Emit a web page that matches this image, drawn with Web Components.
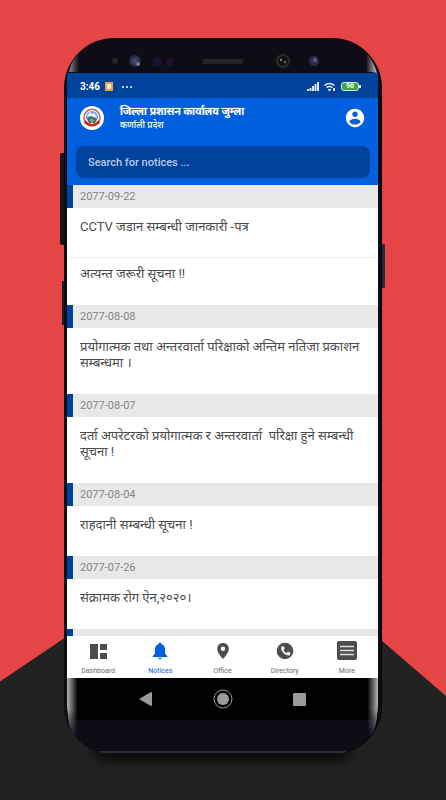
<!DOCTYPE html>
<html lang="ne">
<head>
<meta charset="utf-8">
<meta name="viewport" content="width=device-width, initial-scale=1">
<title>Notices</title>
<style>
  :root {
    --blue: #005fdc;
    --blue-dark: #00439c;
    --grey: #e8e8e8;
    --ink: #4c4c4c;
    --body: #0f0c16;
  }

  body {
    margin: 0;
    font-family: Roboto, "Noto Sans", "Noto Sans Devanagari", sans-serif;
    color: var(--ink);
  }
</style>
</head>
<body>

<promo-stage>
  <phone-frame>
    <status-bar slot="screen" time="3:46" battery="96"></status-bar>
    <app-header slot="screen">
      <span slot="title">जिल्ला प्रशासन कार्यालय जुम्ला</span>
      <span slot="subtitle">कर्णाली प्रदेश</span>
    </app-header>
    <notice-list slot="screen">
      <notice-group date="2077-09-22">
        <notice-item>CCTV जडान सम्बन्धी जानकारी -पत्र</notice-item>
        <notice-item>अत्यन्त जरूरी सूचना !!</notice-item>
      </notice-group>
      <notice-group date="2077-08-08">
        <notice-item>प्रयोगात्मक तथा अन्तरवार्ता परिक्षाको अन्तिम नतिजा प्रकाशन सम्बन्धमा ।</notice-item>
      </notice-group>
      <notice-group date="2077-08-07">
        <notice-item>दर्ता अपरेटरको प्रयोगात्मक र अन्तरवार्ता&nbsp; परिक्षा हुने सम्बन्धी सूचना !</notice-item>
      </notice-group>
      <notice-group date="2077-08-04">
        <notice-item>राहदानी सम्बन्धी सूचना !</notice-item>
      </notice-group>
      <notice-group date="2077-07-26">
        <notice-item>संक्रामक रोग ऐन,२०२०।</notice-item>
      </notice-group>
      <notice-group></notice-group>
    </notice-list>
    <tab-bar slot="screen">
      <tab-item icon="dashboard">Dashboard</tab-item>
      <tab-item icon="bell" active>Notices</tab-item>
      <tab-item icon="pin">Office</tab-item>
      <tab-item icon="phone">Directory</tab-item>
      <tab-item icon="menu">More</tab-item>
    </tab-bar>
    <system-nav slot="screen"></system-nav>
  </phone-frame>
</promo-stage>

<script>
const define = (name, html) => {
  customElements.define(name, class extends HTMLElement {
    connectedCallback() {
      const shadow = this.attachShadow({ mode: "open" });
      shadow.innerHTML = typeof html === "function" ? html(this) : html;
    }
  });
};

const icons = {
  dashboard: `<svg viewBox="0 0 20 20"><path d="M2 3h8v15H2zM12 3h7v6h-7zM12 12h7v6h-7z"/></svg>`,
  bell: `<svg viewBox="0 0 20 20"><path d="M10 1.5c.8 0 1.3.6 1.3 1.4 2.4.6 3.8 2.700 3.8 5.300v4.300l2.200 2.700v.8H2.700v-.8l2.200-2.700V8.200c0-2.600 1.400-4.700 3.800-5.300 0-.8.5-1.400 1.300-1.400zM8.400 16.800h3.200c0 .9-.7 1.500-1.600 1.500s-1.600-.6-1.600-1.500z"/></svg>`,
  pin: `<svg viewBox="0 0 20 20"><path fill-rule="evenodd" d="M10 2C6.700 2 4.200 4.500 4.200 7.700 4.200 12 10 18 10 18s5.800-6 5.800-10.300C15.800 4.500 13.300 2 10 2zm0 3.600a2.200 2.200 0 1 1 0 4.400 2.200 2.200 0 0 1 0-4.400z"/></svg>`,
  phone: `<svg viewBox="0 0 20 20"><circle cx="10" cy="10" r="8.300"/><path fill="#fff" d="M6.600 5.600l1.800-.4c.3 0 .5.100.6.400l.6 1.700c.1.300 0 .5-.2.700l-1 .9c.8 1.600 1.700 2.500 3.300 3.200l.8-1.100c.2-.2.500-.3.700-.2l1.800.8c.3.100.4.400.3.700l-.4 1.700c-.1.300-.3.500-.6.500-4.500 0-8.200-3.700-8.200-8.200 0-.4.200-.6.5-.7z"/></svg>`,
  menu: `<svg viewBox="0 0 20 20"><rect width="20" height="19" rx="2"/><path stroke="#ddd" stroke-width="1.500" d="M3 5.500h14M3 9.500h14M3 13.500h14"/></svg>`,
};

define("promo-stage", `
  <style>
    :host {
      display: flex;
      box-sizing: border-box;
      height: 100vh;
      padding: 38px 64px 46px;
      position: relative;
      isolation: isolate;
      overflow: hidden;
      background: #e54645;
    }

    /* dark hill behind the phone */
    :host::before {
      content: "";
      position: absolute;
      inset: 0;
      z-index: -1;
      background: #222;
      clip-path: polygon(0 85.2%, 54% 64.9%, 100% 87%, 100% 100%, 0 100%);
    }

    ::slotted(*) { flex: 1; }
  </style>
  <slot></slot>
`);

define("phone-frame", `
  <style>
    :host {
      display: flex;
      position: relative;
      min-width: 0;
    }

    .body {
      flex: 1;
      min-width: 0;
      display: flex;
      flex-direction: column;
      box-sizing: border-box;
      position: relative;
      overflow: hidden;
      border-radius: 50px 50px 48px 48px;
      background: var(--body);
      padding: 0 3px;
      border-right: 1px solid #05050a;
    }

    :host::after {
      content: "";
      position: absolute;
      inset: auto 32px 0;
      height: 20px;
      z-index: -1;
      border-radius: 20px;
      box-shadow: 0 4px 12px 2px #080808;
    }

    .top, .chin { display: block; width: 100%; }
    .top { height: 35px; }
    .chin { height: 34px; }

    .key {
      position: absolute;
      width: 4px;
      background: #15161c;
      z-index: -1;
    }
    .volume { left: -4px; top: 16%; height: 92px; border-radius: 2px 0 0 2px; }
    .assist { left: -2px; top: 34%; height: 44px; background: #15222a; }
    .power { right: -3px; top: 206px; height: 44px; border-radius: 0 1px 1px 0; background: #242a3a; }

    .gloss {
      position: absolute;
      bottom: 14px;
      width: 12px;
      height: 62px;
      opacity: 0.9;
      -webkit-mask: linear-gradient(#000 50%, transparent);
    }
    .gloss.left {
      left: 3px;
      background: linear-gradient(90deg, #ccc, transparent 90%);
      border-radius: 0 0 0 14px / 0 0 0 42px;
    }
    .gloss.right {
      right: 3px;
      background: linear-gradient(270deg, #ccc, transparent 90%);
      border-radius: 0 0 14px 0 / 0 0 42px 0;
    }
  </style>
  <span class="key volume"></span>
  <span class="key assist"></span>
  <span class="key power"></span>
  <div class="body">
    <svg class="top" viewBox="0 0 311 35" preserveAspectRatio="none" aria-hidden="true">
      <defs>
        <linearGradient id="shineL"><stop stop-color="#bbb"/><stop offset="1" stop-color="#bbb" stop-opacity="0"/></linearGradient>
        <linearGradient id="shineR"><stop stop-color="#eee" stop-opacity="0"/><stop offset="1" stop-color="#eee"/></linearGradient>
        <radialGradient id="lens"><stop stop-color="#51517e"/><stop offset="1" stop-color="#20203f"/></radialGradient>
      </defs>
      <path fill="url(#shineL)" opacity=".7" d="M2 34Q4 23 12 15v19z"/>
      <path fill="url(#shineR)" opacity=".8" d="M299 15q8 8 11 20l-5-1h-6z"/>
      <circle cx="48" cy="23" r="3" fill="#25242a"/>
      <circle cx="68" cy="23" r="6" fill="url(#lens)"/>
      <circle cx="71" cy="26" r="2" fill="#7777a2"/>
      <circle cx="90" cy="24" r="5" fill="#1a1230"/>
      <circle cx="103" cy="24" r="4" fill="#1a1230"/>
      <rect x="136" y="21" width="40" height="5" rx="1" fill="#242328"/>
      <circle cx="216" cy="23" r="6" fill="#131313" stroke="#2b2a2a" stroke-width="2"/>
      <circle cx="214" cy="22" r="1" fill="#aaa"/><circle cx="218" cy="24" r="1" fill="#888"/>
      <circle cx="247" cy="23" r="5" fill="#2c2c46"/>
      <circle cx="248" cy="22" r="2" fill="#566087"/>
    </svg>
    <slot name="screen"></slot>
    <svg class="chin" viewBox="0 0 311 34" preserveAspectRatio="none" aria-hidden="true">
      <path stroke="#2c2a34" stroke-width="2" d="M32 32h247"/>
    </svg>
    <span class="gloss left"></span>
    <span class="gloss right"></span>
  </div>
`);

define("status-bar", (el) => `
  <style>
    :host {
      display: flex;
      align-items: center;
      height: 25px;
      padding: 2px 19px 0 13px;
      box-sizing: border-box;
      gap: 5px;
      background: var(--blue-dark);
      color: #fff;
      font-size: 10px;
      font-weight: 700;
    }
    svg { display: block; }
    .dots { margin-left: 3px; }
    .signal { margin-left: auto; }
    .battery {
      display: flex;
      align-items: center;
      justify-content: center;
      box-sizing: border-box;
      width: 18px;
      height: 9px;
      border: 1px solid #dde8ee;
      border-radius: 3px;
      background: #3aa745;
      font-size: 7px;
      line-height: 7px;
      position: relative;
    }
    .battery::after {
      content: "";
      position: absolute;
      right: -3px;
      top: 2px;
      width: 2px;
      height: 3px;
      background: #dde8ee;
    }
  </style>
  <span>${el.getAttribute("time")}</span>
  <svg width="8" height="9" viewBox="0 0 8 9"><rect width="8" height="9" fill="#f2a23c"/><rect x="2" y="2" width="4" height="5" rx="1" fill="#fff5dc"/></svg>
  <svg class="dots" width="12" height="4" viewBox="0 0 12 4" fill="#fff"><circle cx="2" cy="2" r="1"/><circle cx="6" cy="2" r="1"/><circle cx="10" cy="2" r="1"/></svg>
  <svg class="signal" width="12" height="9" viewBox="0 0 12 9" fill="#dbe6f5"><path d="M0 7h2v2H0zM2.500 6h2v3h-2zM5 4h2v5H5zM7.500 2h2v7h-2zM10 0h2v9h-2z"/></svg>
  <svg width="12" height="10" viewBox="0 0 12 10" fill="none" stroke="#dbe6f5" stroke-width="1.500"><path d="M.5 3.500q5-4 10 0M2.500 5.700q3-2.500 6 0"/><path fill="#dbe6f5" stroke="none" d="M5.500 9.500L3.700 7.400q1.800-1.500 3.600 0zM9 6h2v3H9z"/></svg>
  <span class="battery">${el.getAttribute("battery")}</span>
`);

define("app-header", `
  <style>
    :host {
      display: block;
      padding: 0 8px 7px 9px;
      background: var(--blue);
      color: #fff;
    }
    .bar {
      display: flex;
      align-items: center;
      height: 48px;
      box-sizing: border-box;
      padding: 0 4px 8px;
    }
    .emblem { display: block; width: 24px; height: 24px; }
    .names {
      flex: 1;
      min-width: 0;
      margin-left: 16px;
      white-space: nowrap;
    }
    h1, p { margin: 0; }
    h1 {
      font-size: 11px;
      line-height: 14px;
      font-weight: 500;
      text-shadow: 0 0 1px #fff;
    }
    p { font-size: 9px; line-height: 12px; font-weight: 500; }
    button {
      border: 0;
      padding: 0;
      background: none;
      color: inherit;
    }
    button svg { display: block; width: 22px; height: 22px; }
    input {
      display: block;
      width: 100%;
      height: 32px;
      box-sizing: border-box;
      padding: 0 12px;
      border: 0;
      border-radius: 8px;
      background: var(--blue-dark);
      color: #fff;
      font: 500 11px Roboto, sans-serif;
    }
    input::placeholder { color: #b9cae6; opacity: 1; }
  </style>
  <div class="bar">
    <svg class="emblem" viewBox="0 0 24 24" aria-hidden="true">
      <circle cx="12" cy="12" r="12" fill="#fff"/>
      <path fill="none" stroke="#b56a5c" stroke-width="1.500" d="M5.500 16A8 8 0 1 1 18.500 16"/>
      <circle cx="12" cy="11" r="6" fill="#6ea7cf"/>
      <path fill="#e9f2f8" d="M7 10l3-4 2 2 2-1 3 4-5 1z"/>
      <path fill="#35698f" d="M7 12l4-2 6 3-2 4H9z"/>
      <path fill="#8f9b4d" d="M9 14l3-2 3 3-3 2z"/>
      <path fill="none" stroke="#c5281f" stroke-width="2.500" d="M4.500 15.500q7.500 7.500 15 0"/>
    </svg>
    <div class="names">
      <h1><slot name="title"></slot></h1>
      <p><slot name="subtitle"></slot></p>
    </div>
    <button type="button" aria-label="Account">
      <svg viewBox="0 0 24 24" fill="currentColor"><path d="M12 2C6.480 2 2 6.480 2 12s4.480 10 10 10 10-4.480 10-10S17.520 2 12 2zm0 3c1.660 0 3 1.340 3 3s-1.340 3-3 3-3-1.340-3-3 1.340-3 3-3zm0 14.200c-2.500 0-4.710-1.280-6-3.220.03-1.990 4-3.080 6-3.080s5.970 1.090 6 3.080c-1.290 1.940-3.500 3.220-6 3.220z"/></svg>
    </button>
  </div>
  <input type="search" placeholder="Search for notices ..." aria-label="Search for notices">
`);

define("notice-list", `
  <style>
    :host {
      display: block;
      flex: 1 1 0;
      min-height: 0;
      overflow: hidden;
      background: #fff;
    }
  </style>
  <slot></slot>
`);

define("notice-group", (el) => `
  <style>
    :host { display: block; }
    h2 {
      margin: 0 0 3px;
      height: 23px;
      box-sizing: border-box;
      padding-left: 7px;
      border-left: 6px solid var(--blue-dark);
      background: var(--grey);
      color: #858585;
      font-size: 11px;
      line-height: 23px;
      font-weight: 400;
    }
  </style>
  <h2>${el.getAttribute("date") ?? ""}</h2>
  <slot></slot>
`);

define("notice-item", `
  <style>
    :host {
      display: block;
      padding: 8px 16px 22px 13px;
      border-bottom: 1px solid transparent;
      font-size: 13px;
      line-height: 16px;
    }
    :host(:not(:last-child)) { border-color: #eee; }
  </style>
  <slot></slot>
`);

define("tab-bar", `
  <style>
    :host { display: block; background: #fff; }
    nav { display: flex; }
    ::slotted(*) { flex: 1 1 0; min-width: 0; }
  </style>
  <nav><slot></slot></nav>
`);

define("tab-item", (el) => `
  <style>
    :host { display: flex; color: #6c6c6c; }
    :host([active]) { color: var(--blue); }
    button {
      flex: 1;
      display: flex;
      flex-direction: column;
      align-items: center;
      gap: 5px;
      height: 42px;
      padding: 5px 0 0;
      border: 0;
      background: none;
      color: inherit;
      font: 400 7px/10px Roboto, sans-serif;
    }
    svg { display: block; width: 20px; height: 20px; fill: #4c4c4c; }
    :host([active]) svg { fill: var(--blue); }
  </style>
  <button type="button">${icons[el.getAttribute("icon")]}<slot></slot></button>
`);

define("system-nav", `
  <style>
    :host {
      display: flex;
      justify-content: space-between;
      align-items: center;
      height: 42px;
      box-sizing: border-box;
      padding: 0 68px;
      background: #000;
    }
    button { border: 0; padding: 0; background: none; }
    svg { display: block; width: 20px; height: 20px; fill: #9b9b9b; }
  </style>
  <button type="button" aria-label="Back"><svg viewBox="0 0 20 20"><path d="M4 10L16 3q1 0 1 1v12q0 1-1 1z"/></svg></button>
  <button type="button" aria-label="Home"><svg viewBox="0 0 20 20"><circle cx="10" cy="10" r="6"/><circle cx="10" cy="10" r="9" fill="none" stroke="#9b9b9b"/></svg></button>
  <button type="button" aria-label="Recent apps"><svg viewBox="0 0 20 20"><rect x="3" y="4" width="13" height="13" rx="1"/></svg></button>
`);
</script>
</body>
</html>
